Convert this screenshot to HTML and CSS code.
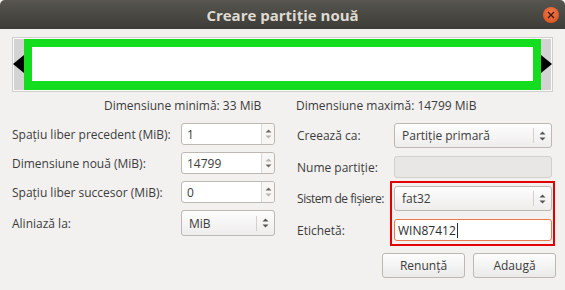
FILE: index.html
```html
<!DOCTYPE html>
<html lang="ro">
<head>
    <meta charset="UTF-8">
    <title>Creare partiție nouă</title>
    <link rel="stylesheet" href="styles.css">
</head>
<body>
    <div class="window">
        <div class="titlebar">
            <span class="title">Creare partiție nouă</span>
            <span class="close">
                <svg width="8" height="8" viewBox="0 0 8 8"><path d="M1 1L7 7M7 1L1 7" stroke="#3a1a0c" stroke-width="1.4"/></svg>
            </span>
        </div>

        <div class="content">
            <div class="partmap">
                <div class="partmap-inner">
                    <div class="partition"><div class="partition-fill"></div></div>
                </div>
                <span class="arrow arrow-left"></span>
                <span class="arrow arrow-right"></span>
            </div>

            <div class="limits">
                <div class="limit-min">Dimensiune minimă: 33 MiB</div>
                <div class="limit-max">Dimensiune maximă: 14799 MiB</div>
            </div>

            <div class="form">
                <div class="column column-left">
                    <div class="row row-spin">
                        <label>Spațiu liber precedent (MiB):</label>
                        <div class="spin"><span class="spin-value">1</span><span class="spin-btns"><svg width="7" height="14" viewBox="0 0 7 14"><path d="M0.5 5.5L3.5 2.5L6.5 5.5Z" fill="#6a6a6a"/><path d="M0.5 8.5L3.5 11.5L6.5 8.5Z" fill="#b4b4b4"/></svg></span></div>
                    </div>
                    <div class="row row-spin">
                        <label>Dimensiune nouă (MiB):</label>
                        <div class="spin"><span class="spin-value">14799</span><span class="spin-btns"><svg width="7" height="14" viewBox="0 0 7 14"><path d="M0.5 5.5L3.5 2.5L6.5 5.5Z" fill="#b4b4b4"/><path d="M0.5 8.5L3.5 11.5L6.5 8.5Z" fill="#6a6a6a"/></svg></span></div>
                    </div>
                    <div class="row row-spin">
                        <label>Spațiu liber succesor (MiB):</label>
                        <div class="spin"><span class="spin-value">0</span><span class="spin-btns"><svg width="7" height="14" viewBox="0 0 7 14"><path d="M0.5 5.5L3.5 2.5L6.5 5.5Z" fill="#6a6a6a"/><path d="M0.5 8.5L3.5 11.5L6.5 8.5Z" fill="#b4b4b4"/></svg></span></div>
                    </div>
                    <div class="row row-combo">
                        <label>Aliniază la:</label>
                        <div class="combo combo-small"><span class="combo-value">MiB</span><span class="combo-btn"><svg width="7" height="14" viewBox="0 0 7 14"><path d="M0.5 5.5L3.5 2.5L6.5 5.5Z" fill="#555"/><path d="M0.5 8.5L3.5 11.5L6.5 8.5Z" fill="#555"/></svg></span></div>
                    </div>
                </div>

                <div class="column-right">
                    <label class="lbl row-1">Creează ca:</label>
                    <div class="combo field row-1"><span class="combo-value">Partiție primară</span><span class="combo-btn"><svg width="7" height="14" viewBox="0 0 7 14"><path d="M0.5 5.5L3.5 2.5L6.5 5.5Z" fill="#555"/><path d="M0.5 8.5L3.5 11.5L6.5 8.5Z" fill="#555"/></svg></span></div>

                    <label class="lbl row-2">Nume partiție:</label>
                    <div class="entry entry-disabled field row-2"></div>

                    <label class="lbl lbl-tight row-3">Sistem de fișiere:</label>
                    <div class="combo field row-3"><span class="combo-value">fat32</span><span class="combo-btn"><svg width="7" height="14" viewBox="0 0 7 14"><path d="M0.5 5.5L3.5 2.5L6.5 5.5Z" fill="#555"/><path d="M0.5 8.5L3.5 11.5L6.5 8.5Z" fill="#555"/></svg></span></div>

                    <label class="lbl row-4">Etichetă:</label>
                    <div class="entry entry-focus field row-4">WIN87412<span class="caret"></span></div>

                    <div class="highlight"></div>
                </div>
            </div>

            <div class="actions">
                <button class="btn">Renunță</button>
                <button class="btn">Adaugă</button>
            </div>
        </div>
    </div>
</body>
</html>
```

FILE: styles.css
```css
html, body {
    margin: 0;
    padding: 0;
}
body {
    width: 565px;
    height: 290px;
    overflow: hidden;
    font-family: "Open Sans", "DejaVu Sans", sans-serif;
    font-size: 12px;
    color: #3c3c3c;
    background-color: #f2f1f0;
}
.window {
    width: 565px;
    height: 290px;
    display: flex;
    flex-direction: column;
}
.titlebar {
    position: relative;
    height: 29px;
    flex-shrink: 0;
    display: flex;
    align-items: center;
    justify-content: center;
    background: linear-gradient(#57554e, #3d3c38);
    border-radius: 5px 5px 0 0;
}
.title {
    color: #dfdbd2;
    font-weight: bold;
    font-size: 15px;
}
.close {
    position: absolute;
    right: 6px;
    top: 7px;
    width: 16px;
    height: 16px;
    border-radius: 50%;
    background: radial-gradient(circle at 50% 35%, #f2784b, #d94c19);
    display: flex;
    align-items: center;
    justify-content: center;
}
.content {
    padding: 8px 12px 0 12px;
}

/* partition graphic */
.partmap {
    position: relative;
    height: 51px;
    border: 1px solid #cfcfcf;
    padding: 1px;
    background-color: #fafafa;
}
.partmap-inner {
    height: 100%;
    background-color: #d3d3d3;
    padding: 0 10px;
    box-sizing: border-box;
}
.partition {
    height: 100%;
    background-color: #14dc1e;
    padding: 8px 8px 9px 8px;
    box-sizing: border-box;
}
.partition-fill {
    height: 100%;
    background-color: #fff;
}
.arrow {
    position: absolute;
    top: 17px;
    width: 0;
    height: 0;
    border-top: 9px solid transparent;
    border-bottom: 9px solid transparent;
}
.arrow-left {
    left: 0;
    border-right: 11px solid #000;
}
.arrow-right {
    right: 0;
    border-left: 11px solid #000;
}

/* size limits */
.limits {
    display: flex;
    height: 26px;
    align-items: center;
}
.limit-min {
    width: 263px;
    padding-left: 92px;
    box-sizing: border-box;
}
.limit-max {
    padding-left: 21px;
}

/* form */
.form {
    display: flex;
    margin-top: 5px;
}
.column {
    display: flex;
    flex-direction: column;
}
.column-left {
    width: 263px;
    gap: 7px;
}
.row {
    display: flex;
    align-items: center;
}
.column-left label {
    width: 169px;
}
.column-right {
    margin-left: 22px;
    display: grid;
    grid-template-columns: 97px 158px;
    grid-template-rows: 25px 22px 25px 22px;
    row-gap: 8px;
    align-items: center;
}
.lbl {
    grid-column: 1;
    white-space: nowrap;
}
.lbl-tight {
    letter-spacing: -0.45px;
}
.field {
    grid-column: 2;
}
.row-1 { grid-row: 1; }
.row-2 { grid-row: 2; }
.row-3 { grid-row: 3; }
.row-4 { grid-row: 4; }
.spin {
    width: 94px;
    height: 22px;
    box-sizing: border-box;
    border: 1px solid #bdb8b2;
    border-radius: 3px;
    background-color: #fff;
    display: flex;
}
.spin-value {
    flex: 1;
    padding-left: 5px;
    display: flex;
    align-items: center;
    border-right: 1px solid #dcd8d4;
}
.spin-btns {
    width: 12px;
    display: flex;
    align-items: center;
    justify-content: center;
    background-color: #f7f6f5;
    border-radius: 0 3px 3px 0;
}
.combo {
    width: 158px;
    height: 25px;
    box-sizing: border-box;
    border: 1px solid #bdb8b2;
    border-radius: 3px;
    background: linear-gradient(#fdfdfd, #eeedec);
    display: flex;
    align-items: center;
}
.combo-small {
    width: 94px;
    height: 26px;
}
.combo-value {
    flex: 1;
    padding-left: 7px;
}
.combo-btn {
    width: 17px;
    height: 15px;
    border-left: 1px solid #d4d0cc;
    display: flex;
    align-items: center;
    justify-content: center;
}
.entry {
    width: 158px;
    height: 22px;
    box-sizing: border-box;
    border: 1px solid #bdb8b2;
    border-radius: 3px;
    background-color: #fff;
    display: flex;
    align-items: center;
    padding-left: 3px;
}
.entry-disabled {
    background-color: #e9e7e5;
    border-color: #d3cfcb;
}
.entry-focus {
    border-color: #e8784d;
    color: #2c2c2c;
}
.caret {
    width: 1px;
    height: 15px;
    background-color: #2c2c2c;
    margin-left: 1px;
}
.highlight {
    grid-column: 2;
    grid-row: 3 / 5;
    align-self: stretch;
    margin: -5px -3px -5px -4px;
    border: 2px solid #e40000;
    pointer-events: none;
}

/* buttons */
.actions {
    display: flex;
    justify-content: flex-end;
    gap: 8px;
    margin-top: 12px;
    margin-right: -3px;
}
.btn {
    width: 83px;
    height: 25px;
    font-family: "Open Sans", "DejaVu Sans", sans-serif;
    font-size: 12px;
    color: #3c3c3c;
    border: 1px solid #bdb8b2;
    border-radius: 3px;
    background: linear-gradient(#fdfdfd, #ebeae9);
    padding: 0;
}
```
